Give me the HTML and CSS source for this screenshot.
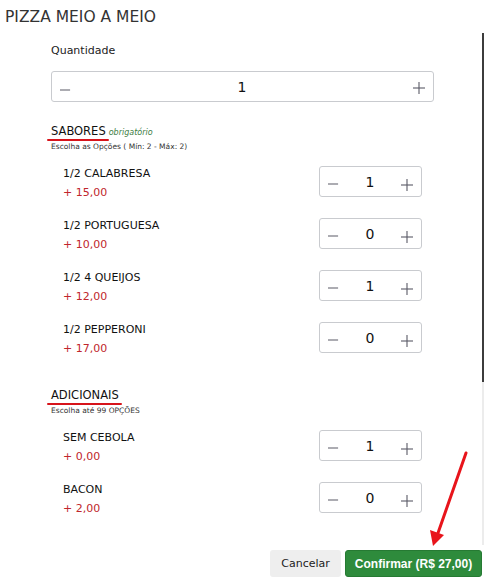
FILE: index.html
```html
<!DOCTYPE html>
<html lang="pt-BR">
<head>
<meta charset="utf-8">
<link rel="stylesheet" href="styles.css">
</head>
<body>
<div class="modal">
  <h1 class="title">PIZZA MEIO A MEIO</h1>
  <div class="body">
    <div class="content">
      <div class="qty-label">Quantidade</div>
      <div class="qty-box">
        <svg class="ico minus" viewBox="0 0 12 12"><line x1="0" y1="6" x2="11" y2="6"/></svg>
        <span class="qty-val">1</span>
        <svg class="ico plus" viewBox="0 0 12 12"><line x1="0" y1="6" x2="12" y2="6"/><line x1="6" y1="0" x2="6" y2="12"/></svg>
      </div>

      <div class="group">
        <div class="group-head"><span class="group-name">SABORES</span><span class="req">obrigatório</span></div>
        <div class="group-sub">Escolha as Opções ( Mín: 2 - Máx: 2)</div>
      </div>
      <div class="items">
        <div class="item">
          <div class="info"><div class="name">1/2 CALABRESA</div><div class="price">+ 15,00</div></div>
          <div class="stepper">
            <svg class="ico minus" viewBox="0 0 12 12"><line x1="0" y1="6" x2="11" y2="6"/></svg>
            <span class="val">1</span>
            <svg class="ico plus" viewBox="0 0 12 12"><line x1="0" y1="6" x2="12" y2="6"/><line x1="6" y1="0" x2="6" y2="12"/></svg>
          </div>
        </div>
        <div class="item">
          <div class="info"><div class="name">1/2 PORTUGUESA</div><div class="price">+ 10,00</div></div>
          <div class="stepper">
            <svg class="ico minus" viewBox="0 0 12 12"><line x1="0" y1="6" x2="11" y2="6"/></svg>
            <span class="val">0</span>
            <svg class="ico plus" viewBox="0 0 12 12"><line x1="0" y1="6" x2="12" y2="6"/><line x1="6" y1="0" x2="6" y2="12"/></svg>
          </div>
        </div>
        <div class="item">
          <div class="info"><div class="name">1/2 4 QUEIJOS</div><div class="price">+ 12,00</div></div>
          <div class="stepper">
            <svg class="ico minus" viewBox="0 0 12 12"><line x1="0" y1="6" x2="11" y2="6"/></svg>
            <span class="val">1</span>
            <svg class="ico plus" viewBox="0 0 12 12"><line x1="0" y1="6" x2="12" y2="6"/><line x1="6" y1="0" x2="6" y2="12"/></svg>
          </div>
        </div>
        <div class="item">
          <div class="info"><div class="name">1/2 PEPPERONI</div><div class="price">+ 17,00</div></div>
          <div class="stepper">
            <svg class="ico minus" viewBox="0 0 12 12"><line x1="0" y1="6" x2="11" y2="6"/></svg>
            <span class="val">0</span>
            <svg class="ico plus" viewBox="0 0 12 12"><line x1="0" y1="6" x2="12" y2="6"/><line x1="6" y1="0" x2="6" y2="12"/></svg>
          </div>
        </div>
      </div>

      <div class="group group2">
        <div class="group-head"><span class="group-name">ADICIONAIS</span></div>
        <div class="group-sub">Escolha até 99 OPÇÕES</div>
      </div>
      <div class="items">
        <div class="item">
          <div class="info"><div class="name">SEM CEBOLA</div><div class="price">+ 0,00</div></div>
          <div class="stepper">
            <svg class="ico minus" viewBox="0 0 12 12"><line x1="0" y1="6" x2="11" y2="6"/></svg>
            <span class="val">1</span>
            <svg class="ico plus" viewBox="0 0 12 12"><line x1="0" y1="6" x2="12" y2="6"/><line x1="6" y1="0" x2="6" y2="12"/></svg>
          </div>
        </div>
        <div class="item">
          <div class="info"><div class="name">BACON</div><div class="price">+ 2,00</div></div>
          <div class="stepper">
            <svg class="ico minus" viewBox="0 0 12 12"><line x1="0" y1="6" x2="11" y2="6"/></svg>
            <span class="val">0</span>
            <svg class="ico plus" viewBox="0 0 12 12"><line x1="0" y1="6" x2="12" y2="6"/><line x1="6" y1="0" x2="6" y2="12"/></svg>
          </div>
        </div>
      </div>
    </div>
    <div class="scrollbar"><div class="thumb"></div></div>
  </div>
  <div class="footer">
    <button class="btn cancel">Cancelar</button>
    <button class="btn confirm">Confirmar (R$ 27,00)</button>
  </div>
  <svg class="arrow" viewBox="0 0 491 580" width="491" height="580">
    <line x1="466" y1="453" x2="438" y2="533" stroke="#e8141b" stroke-width="3" stroke-linecap="round"/>
    <polygon points="433,546 430,530 444,535" fill="#e8141b"/>
  </svg>
</div>
</body>
</html>
```
FILE: styles.css
```css
* { box-sizing: border-box; }
html, body { margin: 0; padding: 0; background: #fff; }
body {
  font-family: "DejaVu Sans", "Noto Sans", sans-serif;
  color: #222;
  width: 491px;
  height: 580px;
  overflow: hidden;
}
.modal { position: relative; width: 491px; height: 580px; display: flex; flex-direction: column; }
.title {
  margin: 0;
  height: 33px;
  padding: 6px 0 0 5px;
  font-family: "DejaVu Sans", sans-serif;
  font-weight: 400;
  font-size: 15.5px;
  color: #333;
  line-height: 22px;
}
.body { display: flex; height: 512px; }
.content { width: 482px; padding: 10px 48px 0 51px; }
.scrollbar { width: 2px; height: 512px; background: #ececec; }
.thumb { width: 2px; height: 349px; background: #3c3c3c; }
.qty-label { font-size: 11px; line-height: 16px; height: 28px; color: #222; }
.qty-box {
  height: 31px;
  border: 1px solid #c9cbcf;
  border-radius: 3px;
  display: flex;
  align-items: center;
  justify-content: space-between;
  padding: 0 8px 0 8px;
}
.ico { stroke: #5a5a66; stroke-width: 1.1; fill: none; }
.minus { width: 11px; height: 12px; }
.qty-box .minus { margin-top: 6px; }
.plus { width: 12px; height: 12px; margin-top: 3px; }
.qty-val, .val { font-size: 14px; color: #111; line-height: 16px; }
.qty-val { margin-top: 1px; }
.group { margin-top: 22px; }
.group2 { margin-top: 35px; }
.group-head { display: flex; align-items: baseline; height: 15px; }
.group-name {
  font-size: 11.5px;
  line-height: 15px;
  color: #111;
  position: relative;
}
.group-name::after {
  content: "";
  position: absolute;
  left: -4px;
  right: -3px;
  bottom: -2px;
  height: 2.5px;
  border-radius: 2px;
  background: #d7141b;
}
.req { font-size: 8px; font-style: italic; color: #3d7d3f; margin-left: 3px; }
.group-sub { font-size: 7.5px; color: #333; margin-top: 2px; line-height: 11px; }
.items { padding: 14px 12px 0 12px; display: flex; flex-direction: column; gap: 21px; }
.item { display: flex; justify-content: space-between; align-items: flex-start; height: 31px; }
.name { font-size: 11px; line-height: 15px; color: #111; }
.price { font-size: 11px; line-height: 15px; color: #c0262c; margin-top: 4px; }
.stepper {
  width: 103px;
  height: 31px;
  border: 1px solid #c9cbcf;
  border-radius: 3px;
  display: flex;
  align-items: center;
  justify-content: space-between;
  padding: 0 8px;
}
.stepper .minus { margin-top: 4px; }
.stepper .plus { margin-top: 6px; }
.val { margin-top: 0; }
.footer { display: flex; justify-content: flex-end; gap: 4px; padding: 5px 9px 0 0; }
.btn {
  height: 27px;
  border: none;
  border-radius: 3px;
  font-family: "DejaVu Sans", sans-serif;
  font-size: 11px;
  padding: 0;
  white-space: nowrap;
}
.cancel { width: 71px; background: #eeeeee; color: #222; }
.confirm {
  width: 137px;
  background: #2e8b3c;
  color: #fff;
  font-family: "Liberation Sans", Arial, sans-serif;
  font-size: 12px;
  font-weight: bold;
  border: 1px solid #267a33;
}
.arrow { position: absolute; left: 0; top: 0; pointer-events: none; }
```
